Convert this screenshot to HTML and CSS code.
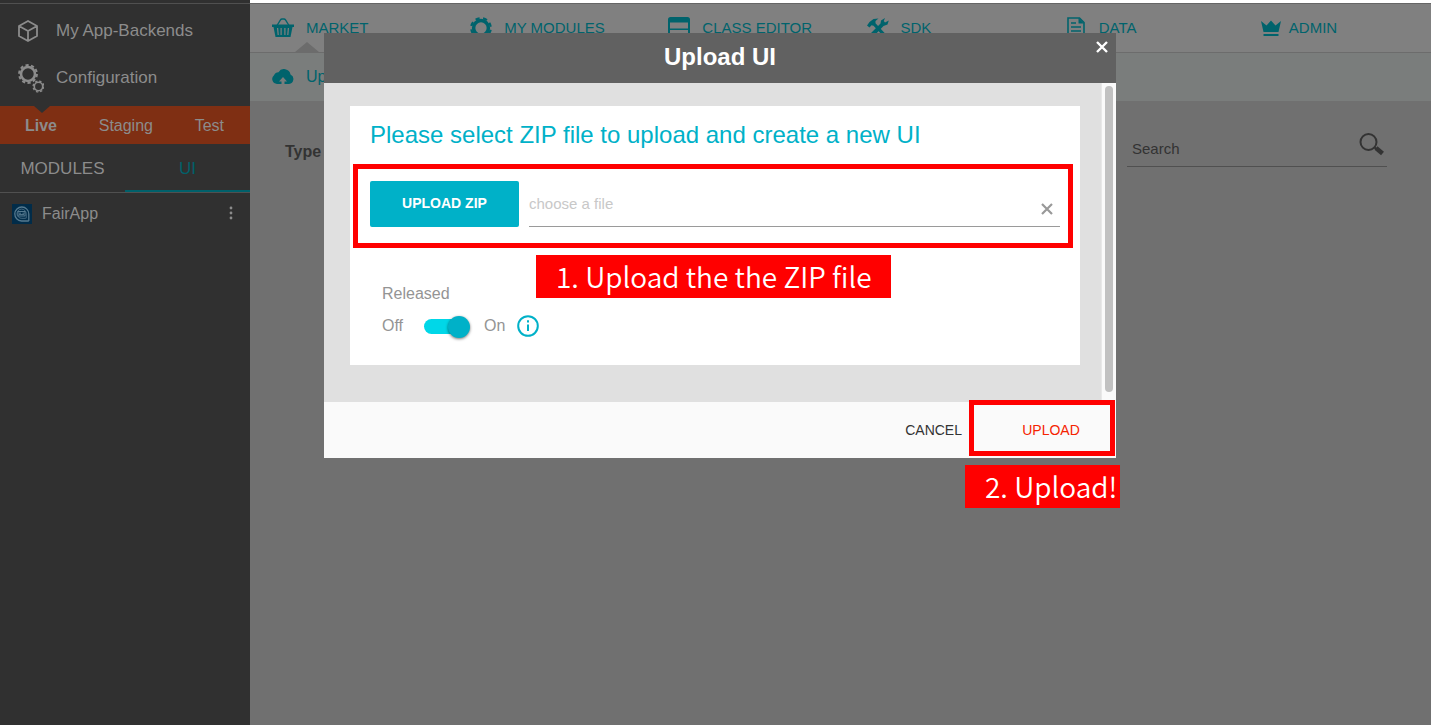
FILE: index.html
```html
<!DOCTYPE html>
<html lang="en">
<head>
<meta charset="utf-8">
<title>Upload UI</title>
<link rel="stylesheet" href="styles.css">
</head>
<body>
<div class="app">
  <aside class="sidebar">
    <nav class="side-nav">
      <a class="side-link" href="#">
        <svg width="28" height="28" viewBox="0 0 28 28" fill="none" stroke="currentColor" stroke-width="1.8" stroke-linejoin="round"><path d="M12 4 L21 9 V19 L12 24 L3 19 V9 Z M3 9 L12 14 L21 9 M12 14 V24"/></svg>
        <span>My App-Backends</span>
      </a>
      <a class="side-link" href="#">
        <svg width="28" height="30" viewBox="0 0 28 30" fill="none" stroke="currentColor"><circle cx="12" cy="11" r="7" stroke-width="2.600"/><circle cx="12" cy="11" r="8.900" stroke-width="2" stroke-dasharray="3.200 2.392"/><circle cx="22.500" cy="23.500" r="4.200" stroke-width="1.600"/><circle cx="22.500" cy="23.500" r="5.400" stroke-width="1.400" stroke-dasharray="2.400 1.841"/></svg>
        <span>Configuration</span>
      </a>
    </nav>
    <nav class="stages">
      <a class="stage stage-active" href="#">Live</a>
      <a class="stage" href="#">Staging</a>
      <a class="stage" href="#">Test</a>
    </nav>
    <nav class="tabs">
      <a class="tab" href="#">MODULES</a>
      <a class="tab tab-active" href="#">UI</a>
    </nav>
    <div class="app-row">
      <svg width="20" height="20" viewBox="0 0 20 20" fill="none" stroke="#55798f"><rect width="20" height="20" fill="#012c49" stroke="none"/><path stroke-width="1.300" d="M16.800 17 H9.500 A7 7 0 1 1 16.800 10 V17"/><path stroke-width=".8" d="M13.800 14.300 H9.800 A4.600 4.600 0 1 1 14.200 9.700 V14.300"/><path stroke-width="1" d="M6 7.500 H13 V12 H6 Z M7 9.200 h2 M7 10.600 h5 M10.500 9.200 h2"/></svg>
      <span class="app-name">FairApp</span>
      <button class="more" aria-label="More options"><svg width="4" height="14" viewBox="0 0 4 14" fill="currentColor"><circle cx="2" cy="2" r="1.400"/><circle cx="2" cy="7" r="1.400"/><circle cx="2" cy="12" r="1.400"/></svg></button>
    </div>
  </aside>
  <main class="main">
    <nav class="topnav">
      <a class="top-link top-active" href="#"><svg width="22" height="20" viewBox="0 0 22 20" fill="currentColor"><path fill-rule="evenodd" d="M0 6.500 H22 V9 H20.500 L18.500 19 H3.500 L1.500 9 H0 Z M5 10 L5.600 17 H6.800 L6.200 10 Z M8.500 10 V17 H9.700 V10 Z M12.300 10 V17 H13.500 V10 Z M15.800 10 L15.200 17 H16.400 L17 10 Z"/><path d="M5 7.500 L8.500 1.800 Q9 1 10 1 H12 Q13 1 13.500 1.800 L17 7.500" fill="none" stroke="currentColor" stroke-width="1.400"/></svg><span>MARKET</span></a>
      <a class="top-link" href="#"><svg width="22" height="22" viewBox="0 0 22 22" fill="none" stroke="currentColor"><circle cx="11" cy="11" r="7.400" stroke-width="3.500"/><circle cx="11" cy="11" r="9.800" stroke-width="2.200" stroke-dasharray="4.200 3.497" stroke-dashoffset="-1.800"/></svg><span>MY MODULES</span></a>
      <a class="top-link" href="#"><svg width="22" height="22" viewBox="0 0 22 22"><rect x="1" y="1" width="20" height="20" rx="1.500" fill="none" stroke="currentColor" stroke-width="2"/><path d="M1 1 H21 V5.500 H1 Z M1 11.500 H21 V13 H1 Z" fill="currentColor"/></svg><span>CLASS EDITOR</span></a>
      <a class="top-link" href="#"><svg width="22" height="22" viewBox="0 0 22 22" fill="currentColor"><path d="M0 8.500 L2.500 5 L6.500 2 L11.500 1.500 L8.500 4 L8.500 6.300 L19.500 18 L17 20 L6.500 8.800 L4.500 8.300 L2.500 10.500 Z"/><path d="M13.500 6.500 L14 3.500 L18 1 L16.800 4 L18 5.500 L21.800 3.500 L20.500 7.500 L16.500 9 L5.500 20.500 L2.500 17.500 Z"/></svg><span>SDK</span></a>
      <a class="top-link" href="#"><svg width="22" height="22" viewBox="0 0 22 22" fill="none" stroke="currentColor" stroke-width="1.600"><path d="M3 1 H14.500 L19 5.500 V21 H3 Z M6 6 H11 M6 10 H16 M6 14 H16"/><path d="M13.500 1 L19 6.500 H13.500 Z" fill="currentColor" stroke="none"/></svg><span>DATA</span></a>
      <a class="top-link top-admin" href="#"><svg width="20" height="18" viewBox="0 0 20 18" fill="currentColor"><path d="M0 2 L5.500 6.500 L10 1.500 L14.500 6.500 L20 2 L17.500 13 H2.500 Z M2.500 15 H17.500 V17 H2.500 Z"/></svg><span>ADMIN</span></a>
    </nav>
    <nav class="subnav">
      <a class="sub-link" href="#"><svg width="22" height="16" viewBox="0 0 22 16" fill="currentColor"><path d="M5 15 A5 5 0 0 1 2 6.200 A5 5 0 0 1 6.500 3.200 A6.500 6.500 0 0 1 18.500 5.500 A5 5 0 0 1 17 15 H12.500 V12.500 H15 L11 8 L7 12.500 H9.500 V15 Z"/></svg><span>Upload UI</span></a>
    </nav>
    <section class="filters">
      <span class="filter-type">Type</span>
      <label class="search">
        <input class="search-input" type="text" placeholder="Search" aria-label="Search">
        <svg width="26" height="26" viewBox="0 0 26 26" fill="none" stroke="currentColor"><circle cx="9.500" cy="11" r="8" stroke-width="2"/><path d="M15 16 L18 18.500" stroke-width="2"/><path d="M17 17 L23.500 22.500" stroke-width="4.500"/></svg>
      </label>
    </section>
  </main>
</div>

<div class="overlay">
  <div class="modal" role="dialog" aria-labelledby="modal-title">
    <header class="modal-head">
      <h1 class="modal-title" id="modal-title">Upload UI</h1>
      <button class="close" aria-label="Close"><svg width="12" height="12" viewBox="0 0 12 12" stroke="currentColor" stroke-width="2.400"><path d="M1 1 L11 11 M11 1 L1 11"/></svg></button>
    </header>
    <div class="modal-body">
      <form class="card">
        <h2 class="card-title">Please select ZIP file to upload and create a new UI</h2>
        <div class="upload-row">
          <button class="upload-button" type="button">UPLOAD ZIP</button>
          <div class="file-field">
            <input class="file-input" type="text" placeholder="choose a file" aria-label="File">
            <button class="clear" type="button" aria-label="Clear file"><svg width="12" height="12" viewBox="0 0 12 12" stroke="currentColor" stroke-width="2.200"><path d="M1 1 L11 11 M11 1 L1 11"/></svg></button>
          </div>
          <div class="mark mark-file"></div>
          <div class="note note-file">1. Upload the the ZIP file</div>
        </div>
        <div class="release">
          <label class="release-label" for="released">Released</label>
          <div class="release-row">
            <span>Off</span>
            <input class="switch" type="checkbox" id="released" checked>
            <span>On</span>
            <svg class="info" width="22" height="22" viewBox="0 0 22 22" fill="none" stroke="currentColor" stroke-width="2"><circle cx="11" cy="11" r="9.800"/><path d="M11 9.500 V16 M11 5.300 V7.500"/></svg>
          </div>
        </div>
      </form>
      <div class="scroll-track"><div class="scroll-thumb"></div></div>
    </div>
    <footer class="modal-foot">
      <button class="action cancel">CANCEL</button>
      <div class="submit">
        <button class="action confirm">UPLOAD</button>
        <div class="mark mark-submit"></div>
        <div class="note note-submit">2. Upload!</div>
      </div>
    </footer>
  </div>
</div>
</body>
</html>
```
FILE: styles.css
```css
* { box-sizing: border-box; }

body {
  margin: 0;
  font: 16px/20px "Liberation Sans", Arial, sans-serif;
  background: #fff;
}

a { color: inherit; text-decoration: none; }

button {
  border: 0;
  padding: 0;
  background: none;
  color: inherit;
  font: inherit;
  cursor: pointer;
}

svg { display: block; flex: none; }

.app { display: flex; min-height: 100vh; }

/* Sidebar */
.sidebar {
  flex: 0 0 250px;
  padding-top: 3px;
  background: #303030;
  color: #8c8c8c;
}

.side-nav {
  border-top: 1px solid #505050;
  padding: 3px 0 5px 16px;
}

.side-link {
  display: flex;
  align-items: center;
  gap: 12px;
  height: 47px;
  font-size: 17px;
}

.stages {
  position: relative;
  display: flex;
  justify-content: space-between;
  padding: 10px 26px 8px 25px;
  background: #7f2f13;
}

.stages::before {
  content: "";
  position: absolute;
  top: 0;
  left: 34px;
  border: 8px solid transparent;
  border-top: 7px solid #303030;
  border-bottom: 0;
}

.stage-active { font-weight: bold; }

.tabs {
  display: flex;
  border-bottom: 1px solid #505050;
}

.tab {
  flex: 1;
  height: 48px;
  line-height: 50px;
  font-size: 17px;
  text-align: center;
}

.tab-active { color: #00606a; border-bottom: 2px solid #00606a; }

.app-row {
  display: flex;
  align-items: center;
  gap: 10px;
  padding: 11px 17px 10px 12px;
}

.app-name { flex: 1; }
.more { padding-bottom: 3px; }

/* Main area */
.main {
  flex: 1;
  min-width: 0;
  margin-top: 3px;
  overflow: hidden;
  background: #707070;
  color: #00636c;
}

.topnav {
  display: grid;
  grid-template-columns: repeat(6, 1fr);
  height: 50px;
  padding-left: 22px;
  margin-right: -30px;
  border-top: 1px solid #666;
  border-bottom: 1px solid #6c6c6c;
  background: #808080;
}

.top-link {
  position: relative;
  display: flex;
  align-items: center;
  gap: 12px;
  font-size: 15px;
}

.top-admin { gap: 8px; margin-left: -2px; }

.top-active::after {
  content: "";
  position: absolute;
  bottom: 0;
  left: 23px;
  border: 12px solid transparent;
  border-bottom: 10px solid #6c6c6c;
  border-top: 0;
}

.subnav {
  display: flex;
  align-items: center;
  height: 48px;
  padding-left: 22px;
  background: #7a7d7c;
}

.sub-link { display: flex; align-items: center; gap: 12px; }

.filters {
  display: flex;
  justify-content: space-between;
  padding: 28px 44px 0 35px;
  color: #333;
}

.filter-type { padding-top: 13px; font-weight: bold; }

.search {
  display: flex;
  width: 260px;
  height: 38px;
  padding: 2px 2px 0 5px;
  border-bottom: 1px solid #505050;
}

.search-input, .file-input {
  flex: 1;
  min-width: 0;
  border: 0;
  outline: 0;
  padding: 0;
  background: none;
  font: 15px/20px "Liberation Sans", Arial, sans-serif;
}

.search-input::placeholder { color: #333; opacity: 1; }

/* Dialog */
.overlay {
  position: fixed;
  inset: 0;
  display: flex;
  justify-content: center;
  align-items: flex-start;
  padding: 33px 0 0 9px;
}

.modal { width: 792px; max-width: 96vw; background: #fafafa; }

.modal-head {
  position: relative;
  padding: 9px 0 11px;
  background: #616161;
  color: #fff;
}

.modal-title {
  margin: 0;
  font-size: 24px;
  line-height: 30px;
  text-align: center;
}

.close { position: absolute; top: 8px; right: 8px; }

.modal-body { display: flex; background: #e0e0e0; }

.card {
  flex: 1;
  margin: 23px 21px 37px 26px;
  padding: 14px 20px 28px;
  background: #fff;
}

.card-title {
  margin: 0 0 31px;
  color: #00b1c8;
  font-size: 24px;
  font-weight: normal;
  line-height: 30px;
}

.upload-row { position: relative; display: flex; gap: 10px; }

.upload-button {
  width: 149px;
  height: 46px;
  padding-bottom: 2px;
  border-radius: 2px;
  background: #00b1c8;
  color: #fff;
  font-size: 14px;
  font-weight: bold;
}

.file-field {
  flex: 1;
  display: flex;
  align-items: center;
  padding-right: 7px;
  border-bottom: 1px solid #9a9a9a;
}

.file-input::placeholder { color: #c8c8c8; opacity: 1; }
.clear { padding-top: 10px; color: #999; }

.mark {
  position: absolute;
  border: 5px solid #f00;
  pointer-events: none;
}

.mark-file { inset: -17px -13px -21px -17px; }

.note {
  position: absolute;
  background: #f00;
  color: #fff;
  font: 350 28px/42px "Noto Sans CJK SC", sans-serif;
  height: 43px;
  white-space: nowrap;
}

.note-file { top: 74px; left: 166px; width: 355px; padding-left: 20px; }

.release { padding: 57px 0 0 12px; color: #949494; }
.release-label { display: block; margin-bottom: 11px; }
.release-row { display: flex; align-items: center; }

.switch {
  appearance: none;
  position: relative;
  width: 44px;
  height: 15px;
  margin: 1px 16px 0 21px;
  border-radius: 8px;
  background: #00d7e8;
}

.switch::before {
  content: "";
  position: absolute;
  top: -3px;
  right: -2px;
  width: 22px;
  height: 22px;
  border-radius: 50%;
  background: #00b1c8;
  box-shadow: 0 1px 3px #0008;
}

.info { margin-left: 12px; color: #00b1c8; }

.scroll-track {
  width: 15px;
  padding: 3px 3px 10px;
  border-left: 1px solid #e8e8e8;
  background: #fafafa;
}

.scroll-thumb { width: 8px; height: 100%; border-radius: 4px; background: #c1c1c1; }

.modal-foot {
  display: flex;
  justify-content: flex-end;
  height: 56px;
  padding-right: 1px;
}

.action { height: 56px; font-size: 14px; }
.cancel { margin-right: 7px; color: #333; }
.submit { position: relative; width: 146px; }
.confirm { width: 100%; padding-left: 18px; color: #f52300; }
.mark-submit { inset: -2px 0 2px; }
.note-submit { top: 63px; left: -4px; width: 155px; padding-left: 20px; }
```
